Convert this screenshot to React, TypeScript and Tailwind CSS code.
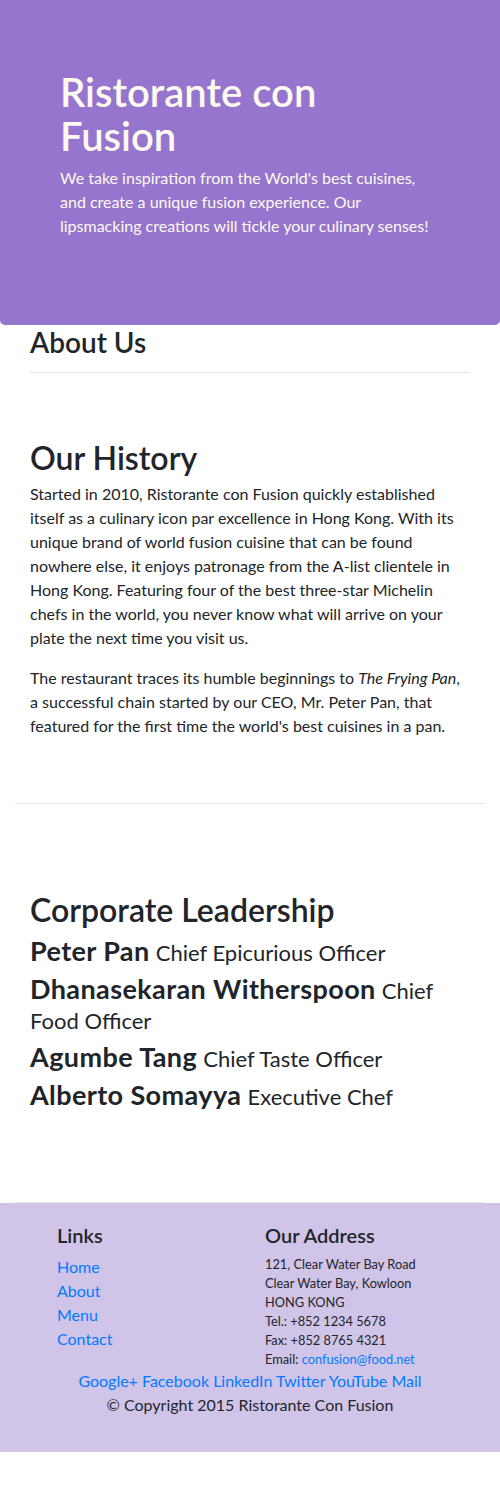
import React from 'react';

const leaders = [
  { name: 'Peter Pan', designation: 'Chief Epicurious Officer' },
  { name: 'Dhanasekaran Witherspoon', designation: 'Chief Food Officer' },
  { name: 'Agumbe Tang', designation: 'Chief Taste Officer' },
  { name: 'Alberto Somayya', designation: 'Executive Chef' },
];

const social = ['Google+', 'Facebook', 'LinkedIn', 'Twitter', 'YouTube', 'Mail'];

const App = () => {
  return (
    <div className="font-['Lato',sans-serif] text-[#212529] bg-white w-[500px]">
      <header className="bg-[#9575CD] text-[#FFFAF0] rounded-b-[5px] px-[60px] pt-[70px] pb-[71px]">
        <h1 className="text-[40px] leading-[44px] font-semibold mb-2">
          Ristorante con
          <br />
          Fusion
        </h1>
        <p className="text-base leading-6 mb-4">
          We take inspiration from the World's best cuisines, and create a unique fusion experience. Our lipsmacking creations will tickle your culinary senses!
        </p>
      </header>

      <div className="px-[15px]">
        <div className="px-[15px]">
          <h3 className="text-[28px] leading-[34px] font-semibold">About Us</h3>
          <hr className="mt-[13px] border-t border-[#e6e6e6]" />
        </div>

        <section className="border-b border-[#e9e9e9] pt-[66px] pb-[49px] px-[15px]">
          <h2 className="text-[32px] leading-[38px] font-semibold mb-[5px]">Our History</h2>
          <p className="text-base leading-6 mb-4">
            Started in 2010, Ristorante con Fusion quickly established itself as a culinary icon par excellence in Hong Kong. With its unique brand of world fusion cuisine that can be found nowhere else, it enjoys patronage from the A-list clientele in Hong Kong. Featuring four of the best three-star Michelin chefs in the world, you never know what will arrive on your plate the next time you visit us.
          </p>
          <p className="text-base leading-6 mb-4">
            The restaurant traces its humble beginnings to <em>The Frying Pan</em>, a successful chain started by our CEO, Mr. Peter Pan, that featured for the first time the world's best cuisines in a pan.
          </p>
        </section>

        <section className="border-b border-[#e9e9e9] pt-[87px] pb-[83px] px-[15px]">
          <h2 className="text-[32px] leading-[38px] font-semibold mb-2">Corporate Leadership</h2>
          {leaders.map((l) => (
            <h4 key={l.name} className="text-[24px] leading-[30px] mb-2">
              <span className="font-bold text-[27px] leading-[20px] tracking-[0.4px]">{l.name}</span>{' '}
              <span className="font-normal text-[22px] leading-[20px]">{l.designation}</span>
            </h4>
          ))}
        </section>
      </div>

      <footer className="bg-[#D1C4E9] pt-5 pb-[19px]">
        <div className="flex">
          <div className="w-[250px] pl-[57px]">
            <h5 className="text-xl leading-6 font-semibold mb-2">Links</h5>
            <ul className="text-base leading-6 text-[#007bff]">
              <li>Home</li>
              <li>About</li>
              <li>Menu</li>
              <li>Contact</li>
            </ul>
          </div>
          <div className="w-[250px] pl-[15px]">
            <h5 className="text-xl leading-6 font-semibold mb-2">Our Address</h5>
            <address className="not-italic text-[12.8px] leading-[19px]">
              121, Clear Water Bay Road<br />
              Clear Water Bay, Kowloon<br />
              HONG KONG<br />
              Tel.: +852 1234 5678<br />
              Fax: +852 8765 4321<br />
              Email: <span className="text-[#007bff]">confusion@food.net</span>
            </address>
          </div>
        </div>
        <div className="text-center text-base leading-6 text-[#007bff]">
          {social.join(' ')}
        </div>
        <p className="text-center text-base leading-6 mb-4">© Copyright 2015 Ristorante Con Fusion</p>
      </footer>
      <div className="h-[49px]" />
    </div>
  );
};

export default App;
